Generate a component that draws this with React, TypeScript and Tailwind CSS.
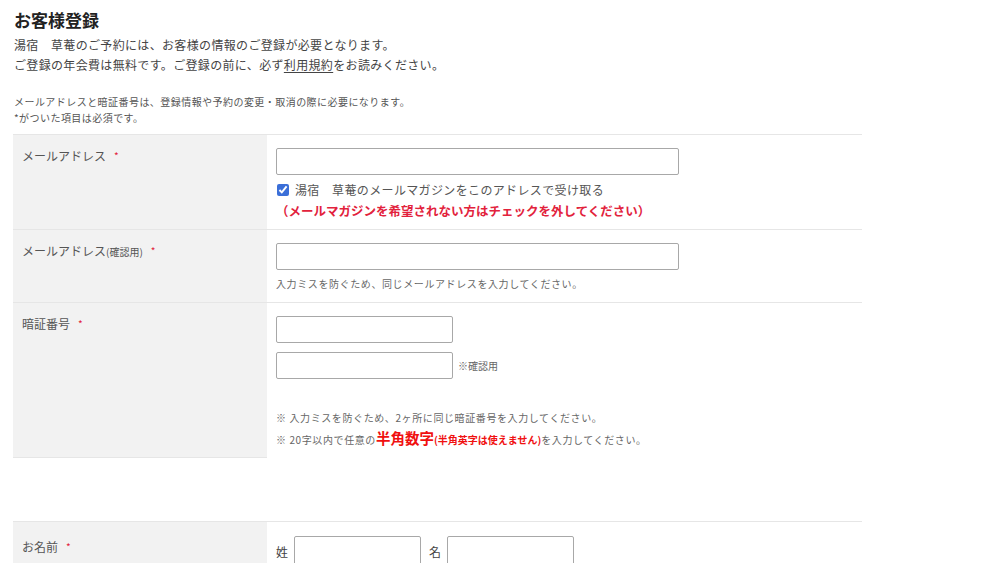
import React from "react";

// お客様登録フォーム（入力欄は見た目のみ）
function Req() {
  return <span className="ml-2 align-top text-[10px] text-[#e2223c]">*</span>;
}

function Row({
  label,
  children,
  first,
}: {
  label: React.ReactNode;
  children: React.ReactNode;
  first?: boolean;
}) {
  return (
    <div className={`flex border-b border-[#e6e6e6] ${first ? "border-t" : ""}`}>
      <div className="w-[254px] shrink-0 bg-[#f2f2f2] pl-[9px] pt-[11px] text-[12px] leading-[20px] text-[#555]">
        {label}
      </div>
      <div className="flex-1 bg-white pl-[9px]">{children}</div>
    </div>
  );
}

const field =
  "block h-[27px] rounded-[2px] border border-[#a8a8a8] bg-white px-2 text-[12px] outline-none";

export default function App() {
  return (
    <div
      className="min-h-[563px] bg-white pl-[13px] text-[#444]"
      style={{ fontFamily: '"Noto Sans CJK JP", "Noto Sans", sans-serif' }}
    >
      <h1 className="pl-[1px] pt-[9px] text-[17px] font-bold leading-[22px] text-[#222]">
        お客様登録
      </h1>
      <p className="mt-[4px] pl-[1px] text-[12px] leading-[19.5px] tracking-[0.028em]">
        湯宿　草菴のご予約には、お客様の情報のご登録が必要となります。
        <br />
        ご登録の年会費は無料です。ご登録の前に、必ず
        <span className="underline underline-offset-2">利用規約</span>
        をお読みください。
      </p>
      <p className="mt-[20px] pl-[1px] text-[10px] leading-[16px] tracking-[0.045em] text-[#555]">
        メールアドレスと暗証番号は、登録情報や予約の変更・取消の際に必要になります。
        <br />
        *がついた項目は必須です。
      </p>

      <div className="mt-[8px] w-[849px]">
        <Row
          first
          label={
            <>
              メールアドレス
              <Req />
            </>
          }
        >
          <div className="pb-[8px] pt-[13px]">
            <input className={`${field} w-[403px]`} />
            <label className="mt-[5px] flex items-center gap-[6px] text-[12px] leading-[20px] tracking-[0.03em] text-[#555]">
              <input
                type="checkbox"
                defaultChecked
                className="ml-[1px] h-[12px] w-[12px] accent-[#3b6fd8]"
              />
              湯宿　草菴のメールマガジンをこのアドレスで受け取る
            </label>
            <p className="text-[12.5px] font-bold leading-[21px] text-[#e2223c]">
              （メールマガジンを希望されない方はチェックを外してください）
            </p>
          </div>
        </Row>

        <Row
          label={
            <>
              メールアドレス<span className="text-[10px]">(確認用)</span>
              <Req />
            </>
          }
        >
          <div className="pb-[10px] pt-[13px]">
            <input className={`${field} w-[403px]`} />
            <p className="mt-[6px] text-[10px] leading-[16px] tracking-[0.06em] text-[#666]">
              入力ミスを防ぐため、同じメールアドレスを入力してください。
            </p>
          </div>
        </Row>

        <div className="flex">
          <div className="w-[254px] shrink-0 border-b border-[#e6e6e6] bg-[#f2f2f2] pl-[9px] pt-[11px] text-[12px] leading-[20px] text-[#555]">
            暗証番号
            <Req />
          </div>
          <div className="flex-1 pb-[8px] pl-[9px] pt-[13px]">
            <input type="password" className={`${field} w-[177px]`} />
            <div className="mt-[9px] flex items-center gap-[5px]">
              <input type="password" className={`${field} w-[177px]`} />
              <span className="text-[10px] text-[#666]">※確認用</span>
            </div>
            <div className="mt-[29px] text-[10px] leading-[20px] tracking-[0.06em] text-[#666]">
              <p>※ 入力ミスを防ぐため、2ヶ所に同じ暗証番号を入力してください。</p>
              <p>
                ※ 20字以内で任意の
                <span className="text-[14.5px] font-bold tracking-normal text-[#f01010]">半角数字</span>
                <span className="font-bold tracking-normal text-[#f01010]">(半角英字は使えません)</span>
                を入力してください。
              </p>
            </div>
          </div>
        </div>

        <div className="mt-[63px] flex border-t border-[#e6e6e6]">
          <div className="flex w-[254px] shrink-0 items-center bg-[#f2f2f2] pl-[9px] pt-[4px] text-[12px] leading-[20px] text-[#555]">
            お名前
            <Req />
          </div>
          <div className="flex flex-1 items-center gap-[6px] pl-[9px] pt-[14px] text-[12px]">
            <span>姓</span>
            <input className={`${field} h-[32px] w-[127px]`} />
            <span className="ml-[2px]">名</span>
            <input className={`${field} h-[32px] w-[127px]`} />
          </div>
        </div>
      </div>
    </div>
  );
}
